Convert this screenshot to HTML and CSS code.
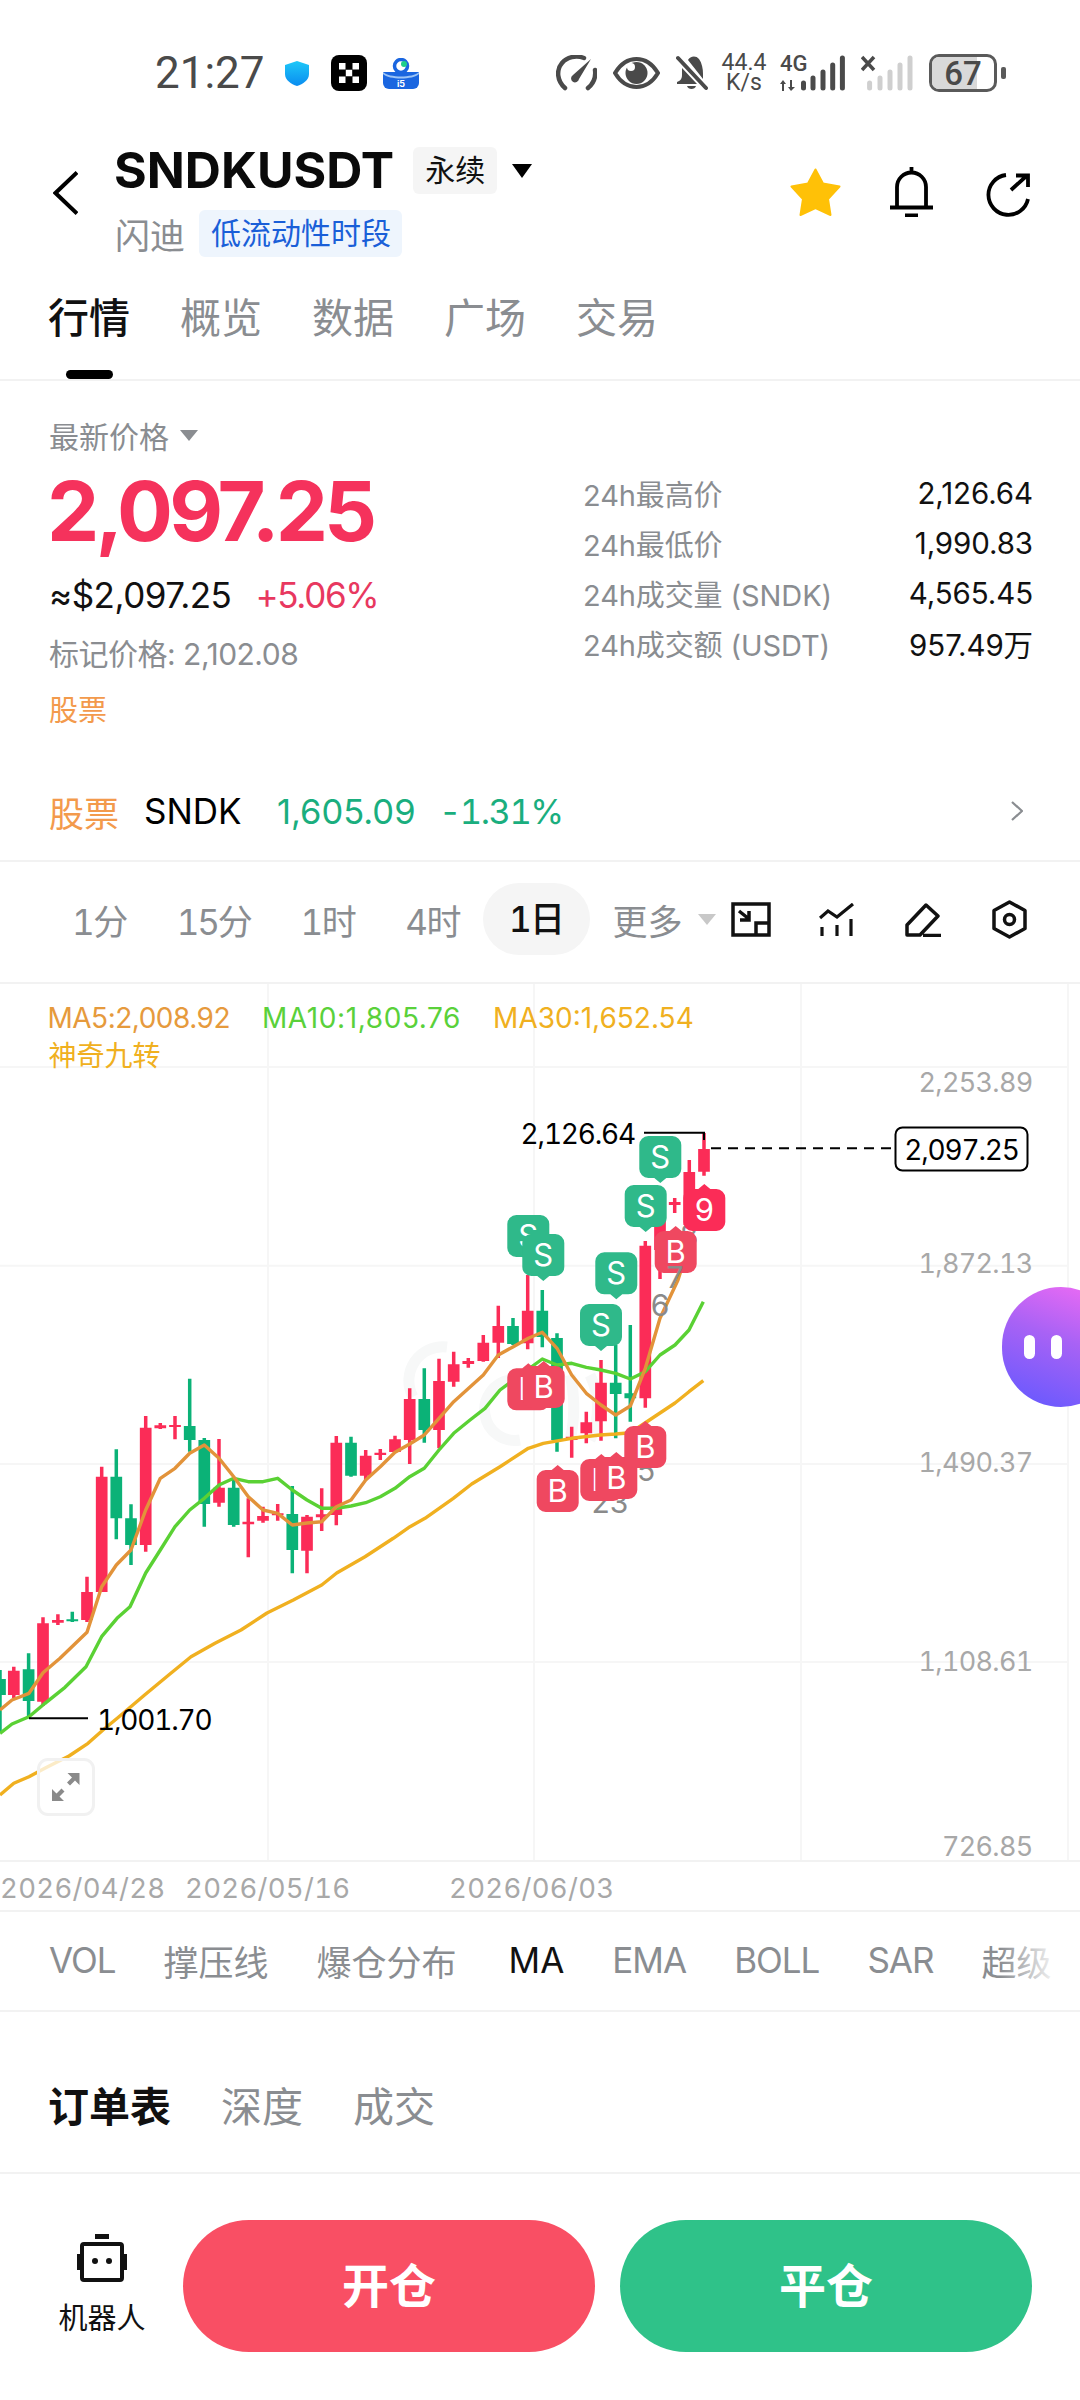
FILE: index.html
```html
<!DOCTYPE html>
<html lang="zh-CN">
<head>
<meta charset="utf-8">
<title>SNDKUSDT</title>
<link rel="stylesheet" href="styles.css">
</head>
<body>
<div class="page">
  <div class="status">
    <span class="time">21:27</span>
    <svg class="st-shield" viewBox="0 0 24 25"><defs><linearGradient id="sh" x1="0" y1="0" x2="0" y2="1"><stop offset="0" stop-color="#1ec8f8"/><stop offset="1" stop-color="#0a8cf0"/></linearGradient></defs><path fill="url(#sh)" d="M12 0 24 4V13C24 19 18 23 12 25 6 23 0 19 0 13V4Z"/></svg>
    <svg class="st-okx" viewBox="0 0 36 36"><rect width="36" height="36" rx="8" fill="#000"/><path fill="#fff" d="M8 8h6.500v6.500H8zM21.500 8H28v6.500h-6.500zM14.800 14.800h6.400v6.400h-6.400zM8 21.500h6.500V28H8zM21.500 21.500H28V28h-6.500z"/></svg>
    <svg class="st-app" viewBox="0 0 36 31"><path fill="#1a66e0" d="M0 14H36V25a6 6 0 0 1-6 6H6a6 6 0 0 1-6-6Z"/><path fill="#9cc4f5" d="M0 14C6 20 30 20 36 14V16C30 22 6 22 0 16Z"/><circle cx="18" cy="8" r="6.500" fill="none" stroke="#1a66e0" stroke-width="3.500"/><circle cx="21" cy="6" r="3" fill="#1fcf8a"/><text class="st-app-text" x="18" y="29">i5</text></svg>
    <div class="status-right">
      <svg class="st-speed" viewBox="0 0 41 36"><path fill="none" stroke="#4a4a4a" stroke-width="4.500" stroke-linecap="round" d="M9 33C1 26 0 15 6 8 11 2 20 0 28 3M32 33C38 28 40 22 39 15"/><path fill="#4a4a4a" d="M35 4 23 24a4 4 0 1 1-6-4Z"/></svg>
      <svg class="st-eye" viewBox="0 0 47 32"><path fill="none" stroke="#4a4a4a" stroke-width="4" d="M2 16C8 6 15 2 23.500 2S39 6 45 16C39 26 32 30 23.500 30S8 26 2 16Z"/><circle cx="23.500" cy="16" r="11" fill="#4a4a4a"/><circle cx="18" cy="10" r="4" fill="#fff"/></svg>
      <svg class="st-mute" viewBox="0 0 32 37"><path fill="#4a4a4a" d="M12 5C14 1 20 0 23 4 26 8 27 14 27 19L27 24ZM6 13 21 29H1V27C4 26 6 24 6 20ZM11 31H20C19 35 12 35 11 31Z"/><path stroke="#4a4a4a" stroke-width="4" stroke-linecap="round" d="M2 3 30 33"/></svg>
      <div class="st-net"><span>44.4</span><span>K/s</span></div>
      <div class="st-sig">
        <div class="st-4g"><span>4G</span><svg class="st-arrows" viewBox="0 0 15 11"><path fill="#4a4a4a" d="M3 0 6 4H4V11H2V4H0ZM11 11 8 7H10V0H12V7H15Z"/></svg></div>
        <svg class="st-bars" viewBox="0 0 44 37"><path stroke="#4a4a4a" stroke-width="5" stroke-linecap="round" d="M2.500 33V28M12 33V23M22 33V17M31.700 33V10M41.400 33V3"/></svg>
      </div>
      <svg class="st-sim2" viewBox="0 0 53 37"><path stroke="#4a4a4a" stroke-width="3.500" d="M1 2 13 15M13 2 1 15"/><path stroke="#cfcfcf" stroke-width="5" stroke-linecap="round" d="M8.600 33V28M19 33V23M29 33V17M39 33V10M49 33V3"/></svg>
      <div class="battery"><div class="battery-fill"></div><span class="battery-num">67</span></div>
      <div class="battery-nub"></div>
    </div>
  </div>

  <header class="topbar">
    <svg class="back" viewBox="0 0 25 44"><path fill="none" stroke="#000" stroke-width="4" d="M24 1.500 2.500 22 24 42.500"/></svg>
    <div class="title-block">
      <div class="title-row">
        <h1 class="symbol">SNDKUSDT</h1>
        <span class="perp">永续</span>
        <span class="caret-dark"></span>
      </div>
      <div class="sub-row">
        <span class="alias">闪迪</span>
        <span class="lowliq">低流动性时段</span>
      </div>
    </div>
    <div class="top-icons">
      <svg class="ic-star" viewBox="0 0 51 48"><path fill="#ffc107" stroke="#ffc107" stroke-width="2" stroke-linejoin="round" d="M25.500 1.500 33 15.500 49.500 18.500 38 31 40.500 47 25.500 40 10.500 47 13 31 1.500 18.500 18 15.500Z"/></svg>
      <svg class="ic-bell" viewBox="0 0 43 50"><path fill="none" stroke="#000" stroke-width="3.800" d="M7 39V20a14.500 14.500 0 0 1 29 0V39M0 40.500H43M21.500 0V6M15 48.500H28"/></svg>
      <svg class="ic-share" viewBox="0 0 44 44"><path fill="none" stroke="#000" stroke-width="3.800" d="M20 2A20 20 0 1 0 42 26M25 17 41 2.500M30 2.500H42V14"/></svg>
    </div>
  </header>

  <nav class="tabs">
    <span class="tab active">行情</span>
    <span class="tab">概览</span>
    <span class="tab">数据</span>
    <span class="tab">广场</span>
    <span class="tab">交易</span>
  </nav>

  <section class="quote">
    <div class="q-left">
      <div class="q-label">最新价格<span class="caret-grey"></span></div>
      <div class="q-price">2,097.25</div>
      <div class="q-usd"><span>≈$2,097.25</span><span class="q-pct">+5.06%</span></div>
      <div class="q-mark">标记价格: 2,102.08</div>
      <div class="q-stock">股票</div>
    </div>
    <div class="q-right">
      <div class="stat"><span>24h最高价</span><b>2,126.64</b></div>
      <div class="stat"><span>24h最低价</span><b>1,990.83</b></div>
      <div class="stat"><span>24h成交量 (SNDK)</span><b>4,565.45</b></div>
      <div class="stat"><span>24h成交额 (USDT)</span><b>957.49万</b></div>
    </div>
  </section>

  <div class="stock-row">
    <span class="sr-tag">股票</span>
    <span class="sr-sym">SNDK</span>
    <span class="sr-price">1,605.09</span>
    <span class="sr-pct">-1.31%</span>
    <svg class="sr-chev" viewBox="0 0 12 20"><path fill="none" stroke="#8a8d91" stroke-width="2.200" d="M1 1 11 10 1 19"/></svg>
  </div>

  <div class="frames">
    <span class="fr">1分</span>
    <span class="fr fr-wide">15分</span>
    <span class="fr">1时</span>
    <span class="fr">4时</span>
    <span class="fr fr-on">1日</span>
    <span class="fr fr-more">更多</span>
    <span class="caret-light"></span>
    <svg class="fi fi-1" viewBox="0 0 40 35"><path fill="none" stroke="#111" stroke-width="3.500" d="M2 2H38V33H2ZM25 21H38V33H25Z"/><path fill="none" stroke="#111" stroke-width="3.500" d="M8 9 18 17M18 9V18H9"/></svg>
    <svg class="fi fi-2" viewBox="0 0 35 33"><path fill="none" stroke="#111" stroke-width="3.200" d="M1 15 9 8 18 14 34 1M3 24V33M18 22V33M32 16V33"/></svg>
    <svg class="fi fi-3" viewBox="0 0 36 35"><path fill="none" stroke="#111" stroke-width="3.500" stroke-linejoin="round" d="M2 33V23L21 3 33 14 15 33ZM18 33.500H36"/></svg>
    <svg class="fi fi-4" viewBox="0 0 35 39"><path fill="none" stroke="#111" stroke-width="3.500" stroke-linejoin="round" d="M17.500 2 33 10.500V28.500L17.500 37 2 28.500V10.500Z"/><circle cx="17.500" cy="19.500" r="5" fill="none" stroke="#111" stroke-width="3.500"/></svg>
  </div>

  <section class="chart">
    <svg class="plot" viewBox="0 984 1080 928">
      <defs>
        <path id="tagS" d="M9 0H33a9 9 0 0 1 9 9V33a9 9 0 0 1-9 9H27L21 47 15 42H9a9 9 0 0 1-9-9V9a9 9 0 0 1 9-9Z"/>
        <path id="tagB" d="M9 0H15L21-5 27 0H33a9 9 0 0 1 9 9V33a9 9 0 0 1-9 9H9a9 9 0 0 1-9-9V9a9 9 0 0 1 9-9Z"/>
      </defs>
      <path class="grid" d="M0 1067H1068M0 1265.700H1068M0 1464H1068M0 1662H1068M268 984V1861M534 984V1861M801 984V1861M1068 984V1861"/>
      <path class="rule" d="M0 1861H1080M0 1911H1080"/>
      <path class="mark" d="M413 1397A34 34 0 0 1 447 1347M520 1440A30 30 0 0 1 510 1380M570 1440C575 1420 575 1395 570 1375M590 1440C600 1420 600 1395 590 1375"/>

      <path class="wick up" d="M13.800 1666.700V1698M43 1617.300V1706M57.900 1614.300V1625M87 1576.700V1622M101.700 1466.700V1592M145.700 1416V1551.700M160.300 1423V1429M175 1416V1439.300M219 1439V1506.700M248.300 1498.300V1557.300M263 1506.700V1522.700M277.700 1504V1520.700M307 1515V1573.300M321.700 1488.300V1531M336.300 1436V1525.300M365.700 1450V1480M380.300 1449V1460M395 1435.700V1452.700M409.700 1388.300V1464M439 1358.700V1448.300M453.700 1351.700V1386.700M468.300 1358V1367.700M483.300 1335V1361.700M498.300 1305.700V1358M527.700 1275V1349.300M571.700 1426.700V1457.700M586.300 1411.700V1443.300M601 1360V1440.700M645.300 1241V1407.700M660 1200V1279M674.700 1198V1213M689.300 1160V1225M704 1133V1175.700"/>
      <path class="body up" d="M13.800 1670.700V1695M43 1623.300V1701.700M57.900 1620V1622.700M87 1592V1620M101.700 1476.700V1592M145.700 1427.700V1545M160.300 1425.300V1428.300M175 1425V1427M219 1487.700V1502.700M248.300 1521.700V1524.300M263 1516V1520.700M277.700 1513.300V1515.300M307 1516.700V1550.700M321.700 1514.300V1517.300M336.300 1442.700V1515M365.700 1455.700V1475.700M380.300 1452.700V1455M395 1439.300V1452M409.700 1399V1440M439 1381V1430M453.700 1364.300V1381.700M468.300 1361V1364M483.300 1342.700V1361M498.300 1326V1342.700M527.700 1310.700V1343.300M571.700 1436.700V1440M586.300 1422.300V1433.300M601 1382.700V1421.300M645.300 1245.700V1398.300M660 1215V1250M674.700 1202V1205M689.300 1172V1225M704 1149V1171.700"/>
      <path class="wick down" d="M0 1670V1733M28.600 1653.300V1718.300M72.300 1611.700V1622M116.300 1449.300V1539.300M131 1504.300V1565M189.700 1378.700V1451.700M204.300 1438V1526.700M233.700 1480V1526.700M292.300 1486V1573.300M351 1436.700V1476.700M424.300 1368.300V1442.700M513 1318V1345M542.300 1290V1347.300M557 1333.300V1451.700M615.700 1345V1438.300M630.300 1325V1421.700"/>
      <path class="body down" d="M0 1679V1695M28.600 1669.300V1701M72.300 1619.300V1621.300M116.300 1476.700V1518.300M131 1518.300V1545M189.700 1426V1440M204.300 1440V1504M233.700 1487.700V1525M292.300 1514V1550M351 1442.700V1475.700M424.300 1399V1430M513 1326V1344M542.300 1310.700V1337M557 1338V1440M615.700 1382.700V1394M630.300 1393.300V1398.300"/>

      <polyline class="ma ma30" points="0,1795 13.800,1783.300 29,1776.700 44.800,1768.300 69,1756 88,1743.300 103,1730 119,1716.700 144.600,1695 168.700,1675 191,1656.700 215,1643.300 241,1630 267,1613 293.300,1600 321.700,1585 336.700,1573 365,1556.700 393.300,1538.300 410,1526.700 425,1518.300 453.300,1498.300 471.700,1484 500,1466.700 528.300,1448.300 543.300,1443.300 571.700,1438.300 600,1435 615.700,1434 630.300,1432.700 645,1423 660,1413 675,1403 689,1391.700 703.300,1380.700"/>
      <polyline class="ma ma10" points="0,1733.300 12,1724 29,1716.700 45,1703.300 65,1687.300 86,1666.700 101.600,1636.700 117,1618.300 130,1606.700 145.700,1573 160.300,1550 175,1526.700 189.700,1510 204.300,1498.300 219,1485 233.700,1478.300 248.300,1481.700 263,1481.700 277.700,1478.300 292.300,1490 307,1500 321.700,1508.300 336.300,1508.300 351,1506 365.700,1502.700 380.300,1496.700 395,1488.300 409.700,1476.700 424.300,1468.300 439,1450 453.700,1433.300 470,1420 485,1408.300 500,1390 542.300,1359 557,1365 571.700,1363.300 586.300,1367.300 601,1370 615.700,1373.300 630.300,1379 645.300,1371.700 660,1355 675,1345 689,1330 703.300,1301.700"/>
      <polyline class="ma ma5" points="0,1710 12,1700 29,1693.300 43,1672.700 60,1658.300 87,1632.300 101.700,1586.700 116.300,1565 131,1550 145.700,1510 160.300,1478.300 175,1468.300 189.700,1453.300 204.300,1445 219,1458.300 233.700,1476.700 248.300,1496.700 263,1510 277.700,1513.300 292.300,1525 307,1523 321.700,1521.700 336.300,1506.700 351,1500 365.700,1480 380.300,1466.700 395,1452.300 409.700,1444 424.300,1435 439,1418.300 453.700,1401.700 483.300,1375 498.300,1355 513.300,1346.700 528.300,1338.300 542.300,1332.300 557,1348.300 571.700,1375 586.300,1393.300 601,1405 615.700,1415 630.300,1406 645.300,1368.300 660,1318.300 678,1280 689,1245"/>

      <text class="digit" x="610" y="1513" text-anchor="middle">23</text>
      <text class="digit" x="646" y="1481" text-anchor="middle">5</text>
      <text class="digit" x="689" y="1246" text-anchor="middle">8</text>

      <use class="tag-s" href="#tagS" x="507.300" y="1215"/><text class="tag-t" x="528.300" y="1247">S</text>
      <use class="tag-s" href="#tagS" x="522.300" y="1234"/><text class="tag-t" x="543.300" y="1266">S</text>
      <use class="tag-s" href="#tagS" x="595.300" y="1252.300"/><text class="tag-t" x="616.300" y="1284">S</text>
      <use class="tag-s" href="#tagS" x="580" y="1304"/><text class="tag-t" x="601" y="1336">S</text>
      <use class="tag-s" href="#tagS" x="624.700" y="1185"/><text class="tag-t" x="645.700" y="1217">S</text>
      <use class="tag-s" href="#tagS" x="639.300" y="1136"/><text class="tag-t" x="660.300" y="1168">S</text>

      <use class="tag-b" href="#tagB" x="654.700" y="1231"/><text class="tag-t" x="675.700" y="1263">B</text>
      <use class="tag-n" href="#tagB" x="683.300" y="1189"/><text class="tag-t" x="704.300" y="1221">9</text>
      <use class="tag-b" href="#tagB" x="507.300" y="1368.300"/><text class="tag-t" x="528.300" y="1400">B</text>
      <use class="tag-b" href="#tagB" x="522.700" y="1366"/><text class="tag-t" x="543.700" y="1398">B</text>
      <use class="tag-b" href="#tagB" x="536.700" y="1470"/><text class="tag-t" x="557.700" y="1502">B</text>
      <use class="tag-b" href="#tagB" x="580.300" y="1459"/><text class="tag-t" x="601.300" y="1491">B</text>
      <use class="tag-b" href="#tagB" x="595.300" y="1457"/><text class="tag-t" x="616.300" y="1489">B</text>
      <use class="tag-b" href="#tagB" x="624.300" y="1426"/><text class="tag-t" x="645.300" y="1458">B</text>

      <text class="digit" x="660" y="1316" text-anchor="middle">6</text>
      <text class="digit" x="675" y="1288" text-anchor="middle">7</text>

      <path class="leader" d="M644 1132.700H704V1140"/>
      <text class="extreme" x="635" y="1144" text-anchor="end">2,126.64</text>
      <path class="leader" d="M29 1718.300H88"/>
      <text class="extreme" x="97" y="1730">1,001.70</text>
      <path class="dash" d="M711 1148.300H895"/>
      <rect class="last-box" x="895.500" y="1127.500" width="132" height="43" rx="7"/>
      <text class="extreme" x="961.500" y="1160" text-anchor="middle">2,097.25</text>

      <text class="axis" x="1032.500" y="1092" text-anchor="end">2,253.89</text>
      <text class="axis" x="1032.500" y="1273" text-anchor="end">1,872.13</text>
      <text class="axis" x="1032.500" y="1472" text-anchor="end">1,490.37</text>
      <text class="axis" x="1032.500" y="1671" text-anchor="end">1,108.61</text>
      <text class="axis" x="1032.500" y="1856" text-anchor="end">726.85</text>
      <text class="axis date" x="0" y="1898">2026/04/28</text>
      <text class="axis date" x="185" y="1898">2026/05/16</text>
      <text class="axis date" x="449" y="1898">2026/06/03</text>
    </svg>
    <div class="legend">
      <div class="legend-row"><span class="lg5">MA5:2,008.92</span><span class="lg10">MA10:1,805.76</span><span class="lg30">MA30:1,652.54</span></div>
      <div class="lg30 lg-nine">神奇九转</div>
    </div>
    <div class="expand">
      <svg viewBox="0 0 28 28"><path fill="#8a8a8a" d="M27.500 0V12L23 7.500 18 12.500 15 9.500 20 4.500 15.500 0ZM0 28V16L4.500 20.500 9.500 15.500 12.500 18.500 7.500 23.500 12 28Z"/></svg>
    </div>
    <div class="bubble"><span class="eye"></span><span class="eye"></span></div>
  </section>

  <div class="indicators">
    <span class="lat">VOL</span><span>撑压线</span><span>爆仓分布</span><span class="ind-on">MA</span><span class="lat">EMA</span><span class="lat">BOLL</span><span class="lat">SAR</span><span>超级</span>
  </div>

  <div class="book">
    <span class="book-on">订单表</span><span>深度</span><span>成交</span>
  </div>

  <footer class="actions">
    <div class="bot">
      <svg class="bot-ic" viewBox="0 0 50 48"><path fill="#111" d="M18 0H32V5H18Z"/><rect x="5" y="10" width="40" height="36" rx="2" fill="none" stroke="#111" stroke-width="4"/><path stroke="#111" stroke-width="4" d="M2 20V36M48 20V36"/><circle cx="18" cy="27" r="3" fill="#111"/><circle cx="32" cy="27" r="3" fill="#111"/></svg>
      <span class="bot-t">机器人</span>
    </div>
    <button class="btn btn-open">开仓</button>
    <button class="btn btn-close">平仓</button>
  </footer>
</div>
</body>
</html>
```

FILE: styles.css
```css
* { box-sizing: border-box; margin: 0; padding: 0; }
html, body { width: 1080px; height: 2400px; background: #fff; overflow: hidden; }
body { font-family: Inter, "Noto Sans CJK SC", sans-serif; color: #000; }
.page { width: 1080px; height: 2400px; position: relative; overflow: hidden; }

/* status bar */
.status { height: 110px; display: flex; align-items: center; padding: 36px 0 0 155px; }
.time { font: 400 44px/1 Roboto, sans-serif; color: #4a4a4a; width: 109px; }
.st-shield { width: 24px; height: 25px; margin-left: 21px; }
.st-okx { width: 36px; height: 36px; margin-left: 22px; }
.st-app { width: 36px; height: 31px; margin-left: 16px; }
.st-app-text { font: 700 9px Inter, sans-serif; fill: #fff; text-anchor: middle; }
.status-right { margin-left: auto; padding-right: 74px; display: flex; align-items: center; }
.st-speed { width: 41px; height: 36px; }
.st-eye { width: 47px; height: 32px; margin-left: 16px; }
.st-mute { width: 32px; height: 37px; margin-left: 16px; }
.st-net { width: 46px; margin-left: 13px; display: flex; flex-direction: column; align-items: center; font: 400 23px/20px Roboto, sans-serif; color: #4a4a4a; }
.st-sig { width: 66px; margin-left: 13px; display: flex; align-items: center; position: relative; height: 38px; }
.st-4g { width: 26px; display: flex; flex-direction: column; align-items: flex-start; font: 500 22px/18px Roboto, sans-serif; color: #4a4a4a; }
.st-arrows { width: 15px; height: 11px; margin-top: 7px; }
.st-bars { width: 44px; height: 37px; margin-left: -5px; }
.st-sim2 { width: 53px; height: 37px; margin-left: 15px; }
.battery { width: 68px; height: 38px; margin-left: 15px; border: 3px solid #5a5a5a; border-radius: 10px; position: relative; display: flex; align-items: center; justify-content: center; overflow: hidden; }
.battery-fill { position: absolute; left: 0; top: 0; bottom: 0; width: 72%; background: #d9d9d9; }
.battery-num { position: relative; font: 500 33px/1 Roboto, sans-serif; color: #4a4a4a; }
.battery-nub { width: 5px; height: 12px; margin-left: 4px; background: #5a5a5a; border-radius: 2px; }

/* header */
.topbar { height: 150px; display: flex; align-items: flex-start; padding: 37px 50px 0 53px; }
.back { width: 25px; height: 44px; margin-top: 24px; flex: none; }
.title-block { margin-left: 36px; }
.title-row { display: flex; align-items: center; height: 47px; }
.symbol { font: 700 50px/47px Inter, sans-serif; color: #0a0a0a; }
.perp { margin-left: 19px; width: 84px; height: 47px; background: #f5f5f5; border-radius: 6px; font-size: 30px; line-height: 47px; text-align: center; color: #111; }
.caret-dark { margin-left: 15px; border-left: 10px solid transparent; border-right: 10px solid transparent; border-top: 14px solid #000; }
.sub-row { display: flex; align-items: center; margin-top: 16px; height: 47px; }
.alias { font-size: 35px; color: #8a8d91; margin: 0 14px 0 1px; }
.lowliq { height: 47px; line-height: 47px; padding: 0 11px 0 12px; background: #eef5fd; border-radius: 6px; font-size: 30px; color: #1a5fd8; }
.top-icons { margin-left: auto; display: flex; align-items: flex-start; }
.ic-star { width: 51px; height: 48px; margin-top: 21px; }
.ic-bell { width: 43px; height: 50px; margin-left: 49px; margin-top: 20px; }
.ic-share { width: 44px; height: 44px; margin-left: 53px; margin-top: 26px; }

/* tabs */
.tabs { height: 121px; display: flex; gap: 50px; padding: 34px 0 0 48px; border-bottom: 2px solid #f2f2f2; }
.tab { position: relative; font-size: 41px; line-height: 48px; color: #8a8d91; }
.tab.active { color: #111; font-weight: 500; }
.tab.active::after { content: ""; position: absolute; left: 18px; top: 76px; width: 47px; height: 9px; border-radius: 5px; background: #000; }

/* quote */
.quote { height: 379px; display: flex; justify-content: space-between; padding: 32px 47px 0 49px; }
.q-label { height: 44px; display: flex; align-items: center; font-size: 30px; color: #8a8d91; }
.caret-grey { margin-left: 11px; border-left: 9px solid transparent; border-right: 9px solid transparent; border-top: 11px solid #8a8d91; }
.q-price { height: 106px; margin-left: -2px; font: 700 83px/108px Inter, sans-serif; letter-spacing: -3.800px; color: #f5325c; }
.q-usd { height: 64px; display: flex; align-items: center; gap: 24px; font-size: 35px; letter-spacing: -.5px; color: #111; }
.q-pct { color: #e8385f; letter-spacing: -1.300px; }
.q-mark { height: 55px; line-height: 55px; font-size: 30px; letter-spacing: -.5px; color: #8a8d91; }
.q-stock { height: 57px; line-height: 57px; font-size: 29px; color: #f39a4c; }
.q-right { width: 450px; margin-top: 55px; }
.stat { height: 50px; display: flex; align-items: center; justify-content: space-between; font-size: 29px; letter-spacing: -.1px; color: #8a8d91; }
.stat b { font-weight: 400; font-size: 29.500px; color: #111; }

/* stock row */
.stock-row { height: 102px; display: flex; align-items: center; padding: 2px 57px 0 49px; border-bottom: 2px solid #f2f2f2; font-size: 35px; }
.sr-tag { font-size: 35px; color: #f39a4c; width: 95px; }
.sr-sym { width: 133px; color: #000; }
.sr-price { width: 162px; color: #1aae7e; font-size: 34.500px; }
.sr-pct { color: #1aae7e; font-variant-numeric: tabular-nums; font-size: 34.500px; letter-spacing: -1.500px; }
.sr-chev { width: 12px; height: 20px; margin-left: auto; }

/* timeframes */
.frames { height: 122px; display: flex; align-items: center; gap: 50px; padding: 0 0 6px 72px; border-bottom: 2px solid #f2f2f2; font-size: 35px; color: #8a8d91; font-variant-numeric: tabular-nums; }
.fr { letter-spacing: -1.500px; }
.fr-wide { letter-spacing: -2.200px; }
.fr-on { height: 72px; line-height: 72px; margin: 0 -27px; padding: 0 26px; border-radius: 36px; background: #f5f5f5; color: #111; font-weight: 500; }
.fr-more { letter-spacing: 0; }
.caret-light { margin-left: -35px; border-left: 9px solid transparent; border-right: 9px solid transparent; border-top: 11px solid #c8c8c8; }
.fi { flex: none; }
.fi-1 { width: 40px; height: 35px; margin-left: -35px; }
.fi-2 { width: 35px; height: 33px; margin-left: -2px; }
.fi-3 { width: 36px; height: 35px; margin-left: 1px; }
.fi-4 { width: 35px; height: 39px; margin-left: 1px; }

/* chart */
.chart { height: 928px; position: relative; }
.plot { display: block; width: 1080px; height: 928px; }
.grid { fill: none; stroke: #f6f6f6; stroke-width: 2; }
.rule { fill: none; stroke: #f2f2f2; stroke-width: 2; }
.mark { fill: none; stroke: #f7f8f8; stroke-width: 11; }
.wick, .body { fill: none; }
.wick { stroke-width: 3.500; }
.body { stroke-width: 11.700; }
.up { stroke: #fb2c57; }
.down { stroke: #0bb277; }
.ma { fill: none; stroke-width: 3.400; stroke-linejoin: round; }
.ma5 { stroke: #e2933a; }
.ma10 { stroke: #5ad134; }
.ma30 { stroke: #f0b020; }
.tag-s { fill: #2fb98a; }
.tag-b { fill: #ef4860; }
.tag-n { fill: #fb2c57; }
.tag-t { font: 400 31px Inter, sans-serif; fill: #fff; text-anchor: middle; }
.digit { font: 400 30px Inter, sans-serif; fill: #8a8a8a; }
.leader { fill: none; stroke: #000; stroke-width: 2; }
.dash { fill: none; stroke: #000; stroke-width: 2; stroke-dasharray: 10 7; }
.last-box { fill: #fff; stroke: #000; stroke-width: 2; }
.extreme { font: 400 28px Inter, sans-serif; fill: #000; font-variant-numeric: tabular-nums; letter-spacing: -1.200px; }
.axis { font: 400 27px Inter, sans-serif; fill: #a8a8a8; font-variant-numeric: tabular-nums; letter-spacing: -.7px; }
.axis.date { font-size: 27.500px; letter-spacing: .3px; }
.legend { position: absolute; left: 47.500px; top: 15px; font-size: 28px; line-height: 38px; }
.legend-row { display: flex; gap: 32px; }
.lg5 { color: #e69a3c; letter-spacing: -.5px; }
.lg10 { color: #5ad13a; letter-spacing: .6px; }
.lg30 { color: #f0b020; }
.lg-nine { margin-left: 1px; }
.expand { position: absolute; left: 37px; top: 774px; width: 58px; height: 58px; display: flex; align-items: center; justify-content: center; border: 3px solid #f1f1f1; border-radius: 11px; background: rgba(255,255,255,.75); }
.expand svg { width: 28px; height: 28px; }
.bubble { position: absolute; left: 1002px; top: 303px; width: 118px; height: 120px; border-radius: 60px; background: linear-gradient(200deg, #f66cf4 0%, #a862f5 45%, #6158ff 100%); display: flex; align-items: center; gap: 16px; padding-left: 22px; }
.eye { width: 11px; height: 24px; border-radius: 6px; background: #fff; }

/* indicators */
.indicators { height: 100px; display: flex; align-items: center; gap: 48px; padding: 0 0 2px 49px; border-bottom: 2px solid #f2f2f2; font-size: 35px; color: #8a8d91; white-space: nowrap; overflow: hidden; position: relative; }
.indicators span { flex: none; }
.indicators::after { content: ""; position: absolute; right: 0; top: 0; bottom: 2px; width: 80px; background: linear-gradient(90deg, rgba(255,255,255,0), #fff 75%); }
.indicators .lat { letter-spacing: -1px; }
.ind-on { color: #111; margin-left: 4px; }

/* book */
.book { height: 162px; display: flex; align-items: center; gap: 50px; padding: 23px 0 0 48px; border-bottom: 2px solid #f2f2f2; font-size: 41px; color: #8a8d91; }
.book-on { color: #111; font-weight: 600; }

/* actions */
.actions { height: 226px; display: flex; padding: 46px 0 0 183px; gap: 25px; position: relative; }
.bot { position: absolute; left: 58px; top: 60px; width: 88px; display: flex; flex-direction: column; align-items: center; }
.bot-ic { width: 50px; height: 48px; }
.bot-t { margin-top: 17px; font-size: 29px; line-height: 40px; color: #111; }
.btn { width: 412px; height: 132px; border: 0; padding-bottom: 7px; border-radius: 66px; font-family: Inter, "Noto Sans CJK SC", sans-serif; font-size: 47px; font-weight: 700; color: #fff; }
.btn-open { background: #f94f64; }
.btn-close { background: #2fc289; }
```
